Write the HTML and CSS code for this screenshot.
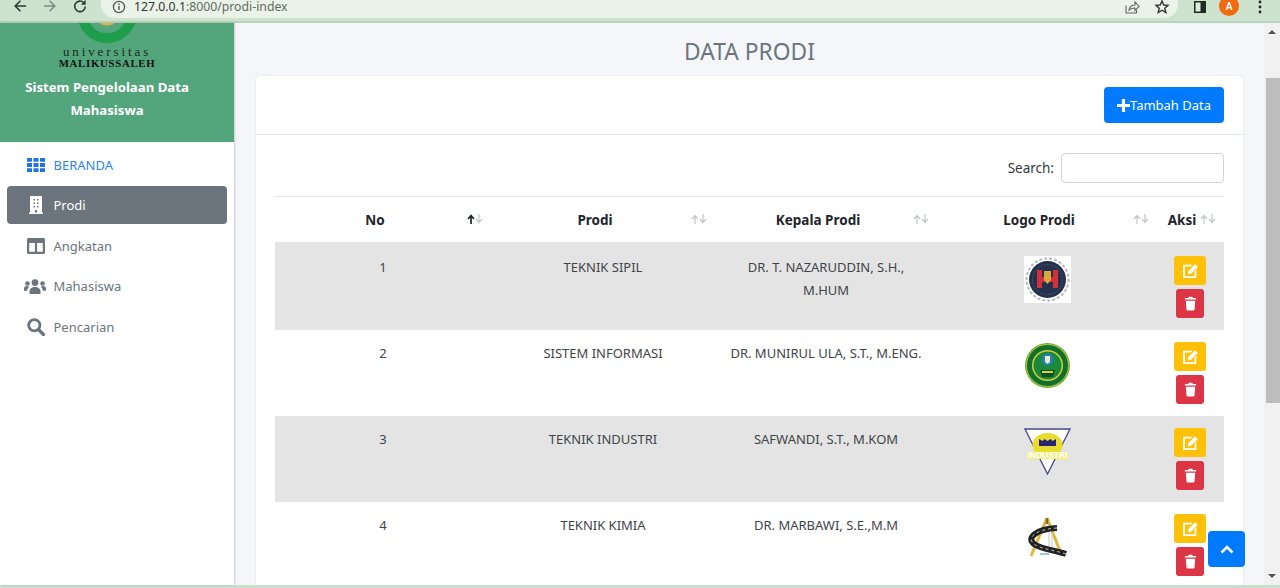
FILE: index.html
```html
<!DOCTYPE html>
<html lang="id">
<head>
<meta charset="utf-8">
<title>Data Prodi</title>
<link rel="stylesheet" href="styles.css">
</head>
<body>
<header class="chrome">
  <div class="nav-icons">
    <svg class="nav-ic" viewBox="0 0 16 16"><path d="M15 8H3M8.500 2 2.500 8l6 6" fill="none" stroke="#2e3a32" stroke-width="1.800"/></svg>
    <svg class="nav-ic" viewBox="0 0 16 16"><path d="M1 8h12M7.500 2l6 6-6 6" fill="none" stroke="#7d8c80" stroke-width="1.800"/></svg>
    <svg class="nav-ic" viewBox="0 0 16 16"><path d="M14 8.500a6 6 0 1 1-1.800-4.400" fill="none" stroke="#2e3a32" stroke-width="1.800"/><path d="M14.500 1v5.500H9z" fill="#2e3a32"/></svg>
  </div>
  <div class="omnibox">
    <svg class="info" viewBox="0 0 14 14"><circle cx="7" cy="7" r="5.600" fill="none" stroke="#555" stroke-width="1.300"/><path d="M7 6v4M7 3.600v1.300" stroke="#555" stroke-width="1.400"/></svg>
    <span class="url"><span class="url-host">127.0.0.1</span>:8000/prodi-index</span>
    <span class="spacer"></span>
    <svg class="omni-ic" viewBox="0 0 16 16"><path d="M2 6.500V14h10.500v-3" fill="none" stroke="#666" stroke-width="1.100"/><path d="M5 11c.5-3 3-5 6-5V3l4 4.500-4 4V9c-2.500 0-4.500.5-6 2z" fill="none" stroke="#666" stroke-width="1.100"/></svg>
    <svg class="omni-ic last" viewBox="0 0 16 16"><path d="m8 2 1.800 4 4.200.4-3.200 2.800 1 4.300L8 11.200 4.200 13.500l1-4.300L2 6.400 6.200 6z" fill="none" stroke="#333" stroke-width="1.400"/></svg>
  </div>
  <div class="chrome-right">
    <svg class="side-ic" viewBox="0 0 14 14"><path d="M1 1h12v12H1z" fill="#1f2a22"/><path d="M2.500 2.500h5v9h-5z" fill="#dcebd9"/></svg>
    <span class="avatar">A</span>
    <svg class="dots" viewBox="0 0 4 14"><circle cx="2" cy="2" r="1.400"/><circle cx="2" cy="7" r="1.400"/><circle cx="2" cy="12" r="1.400"/></svg>
  </div>
</header>

<div class="app">
  <aside class="sidebar">
    <div class="brand">
      <svg viewBox="0 0 60 20" class="brand-arc"><circle cx="30" cy="-10" r="25" fill="none" stroke="#1e9e4a" stroke-width="10"/><ellipse cx="30" cy="0" rx="7" ry="2.500" fill="#d9b44a"/></svg>
      <div class="brand-uni">universitas</div>
      <div class="brand-mal">MALIKUSSALEH</div>
      <div class="brand-title">Sistem Pengelolaan Data Mahasiswa</div>
    </div>
    <nav class="menu">
      <a class="menu-item home">
        <svg class="menu-ic grid" viewBox="0 0 18 16" preserveAspectRatio="none"><path fill="#1f74e0" d="M0 0h5v4.300H0zM6.500 0h5v4.300h-5zM13 0h5v4.300h-5zM0 5.800h5v4.400H0zM6.500 5.800h5v4.400h-5zM13 5.800h5v4.400h-5zM0 11.700h5V16H0zM6.500 11.700h5V16h-5zM13 11.700h5V16h-5z"/></svg>
        <span>BERANDA</span>
      </a>
      <a class="menu-item active">
        <svg class="menu-ic tall" viewBox="0 0 18 18"><path fill="#fff" fill-rule="evenodd" d="M3 0h12v16.500h1V18H2v-1.500h1zM6.500 3v1.500H8V3zM10 3v1.500h1.500V3zM6.500 6.500V8H8V6.500zM10 6.500V8h1.500V6.500zM6.500 10v1.500H8V10zM10 10v1.500h1.500V10zM8 14v2.500h2V14z"/></svg>
        <span>Prodi</span>
      </a>
      <a class="menu-item">
        <svg class="menu-ic" viewBox="0 0 18 16"><path fill="#6c757d" fill-rule="evenodd" d="M1.500 0h15A1.500 1.500 0 0 1 18 1.500v13a1.500 1.500 0 0 1-1.500 1.500h-15A1.500 1.500 0 0 1 0 14.500v-13A1.500 1.500 0 0 1 1.500 0zM2.200 5v8.800h5.700V5zm7.900 0v8.800h5.700V5z"/></svg>
        <span>Angkatan</span>
      </a>
      <a class="menu-item">
        <svg class="menu-ic wide" viewBox="0 0 22 15"><g fill="#6c757d"><circle cx="11" cy="3.600" r="3.400"/><circle cx="3.500" cy="4.500" r="2.300"/><circle cx="18.500" cy="4.500" r="2.300"/><path d="M5.500 15v-2.500C5.500 9.500 8 8 11 8s5.500 1.500 5.500 4.500V15zM0 10c0-1.800 1-3 2.800-3 1 0 1.700.2 2.500.8-1.300 1-2 2.500-2.200 4H0zM22 10c0-1.800-1-3-2.800-3-1 0-1.700.2-2.500.8 1.300 1 2 2.500 2.200 4H22z"/></g></svg>
        <span>Mahasiswa</span>
      </a>
      <a class="menu-item">
        <svg class="menu-ic tall" viewBox="0 0 18 18"><circle cx="7.300" cy="7.300" r="5.600" fill="none" stroke="#6c757d" stroke-width="2.800"/><path d="m11.500 11.500 5 5" stroke="#6c757d" stroke-width="3.200" stroke-linecap="round"/></svg>
        <span>Pencarian</span>
      </a>
    </nav>
  </aside>

  <main class="content">
    <h1 class="page-title">DATA PRODI</h1>
    <section class="card">
      <div class="card-head">
        <button class="btn-add"><svg class="plus" viewBox="0 0 14 14"><path d="M5.300 0h3.400v5.300H14v3.400H8.700V14H5.300V8.700H0V5.300h5.300z" fill="#fff"/></svg>Tambah Data</button>
      </div>
      <div class="card-body">
        <div class="search-row"><label class="search-label">Search:</label><input class="search-input" type="text"></div>
        <table class="data">
          <thead>
            <tr>
              <th class="c-no"><span class="th-txt">No</span><svg class="sort" viewBox="0 0 16 10"><use href="#ic-sort-on"/></svg></th>
              <th class="c-prodi"><span class="th-txt">Prodi</span><svg class="sort" viewBox="0 0 16 10"><use href="#ic-sort"/></svg></th>
              <th class="c-kepala"><span class="th-txt">Kepala Prodi</span><svg class="sort" viewBox="0 0 16 10"><use href="#ic-sort"/></svg></th>
              <th class="c-logo"><span class="th-txt">Logo Prodi</span><svg class="sort" viewBox="0 0 16 10"><use href="#ic-sort"/></svg></th>
              <th class="c-aksi"><span class="th-txt">Aksi</span><svg class="sort" viewBox="0 0 16 10"><use href="#ic-sort"/></svg></th>
            </tr>
          </thead>
          <tbody>
            <tr class="odd">
              <td>1</td><td>TEKNIK SIPIL</td><td class="kepala">DR. T. NAZARUDDIN, S.H., M.HUM</td>
              <td><svg class="logo" viewBox="0 0 47 47"><rect width="47" height="47" fill="#fff"/><circle cx="23.500" cy="23.500" r="21" fill="none" stroke="#b4b8c4" stroke-width="2" stroke-dasharray="3 2"/><circle cx="23.500" cy="23.500" r="18.500" fill="#25304d"/><circle cx="23.500" cy="23.500" r="15" fill="none" stroke="#56607a" stroke-width="1" stroke-dasharray="1.500 1.500"/><path d="M13 14h5v7h11v-7h5v18h-5v-6H18v6h-5z" fill="#d2303a"/><path d="M20 15h7v9l-3.500 4-3.500-4z" fill="#d9a93a"/></svg></td>
              <td class="actions"><a class="btn edit"><svg viewBox="0 0 16 16"><use href="#ic-edit"/></svg></a><a class="btn del"><svg viewBox="0 0 14 16"><use href="#ic-trash"/></svg></a></td>
            </tr>
            <tr>
              <td>2</td><td>SISTEM INFORMASI</td><td class="kepala">DR. MUNIRUL ULA, S.T., M.ENG.</td>
              <td><svg class="logo" viewBox="0 0 47 47"><circle cx="23.500" cy="23.500" r="22.500" fill="#76ad2b"/><circle cx="23.500" cy="23.500" r="21" fill="#12702f"/><circle cx="23.500" cy="23.500" r="21" fill="none" stroke="#c9d24a" stroke-width=".8"/><circle cx="23.500" cy="23.500" r="15.500" fill="#d9cf37"/><circle cx="23.500" cy="23.500" r="14" fill="#1a8a3a"/><circle cx="23.500" cy="17.500" r="6" fill="#2a7fb0"/><path d="M21 14h5v6l-2.500 2-2.500-2z" fill="#e8ecd2"/><path d="M16 28h15l-2 7H18z" fill="#0d4f22"/><path d="M18 29h11v2H18z" fill="#e4c930"/></svg></td>
              <td class="actions"><a class="btn edit"><svg viewBox="0 0 16 16"><use href="#ic-edit"/></svg></a><a class="btn del"><svg viewBox="0 0 14 16"><use href="#ic-trash"/></svg></a></td>
            </tr>
            <tr class="odd">
              <td>3</td><td>TEKNIK INDUSTRI</td><td class="kepala">SAFWANDI, S.T., M.KOM</td>
              <td><svg class="logo" viewBox="0 0 47 47"><path d="M1 1h45L23.500 46z" fill="#fff" stroke="#4a4590" stroke-width="1.300"/><ellipse cx="23.500" cy="17" rx="15" ry="12" fill="#e8dc2e"/><path d="M15 11l3.500 2 2-2 3 2 3-2 2 2 3.500-2v7H15z" fill="#2a2476"/><path d="M3 24h41v7H3z" fill="#f4f078"/><text x="23.500" y="30.300" class="logo-txt">INDUSTRI</text></svg></td>
              <td class="actions"><a class="btn edit"><svg viewBox="0 0 16 16"><use href="#ic-edit"/></svg></a><a class="btn del"><svg viewBox="0 0 14 16"><use href="#ic-trash"/></svg></a></td>
            </tr>
            <tr>
              <td>4</td><td>TEKNIK KIMIA</td><td class="kepala">DR. MARBAWI, S.E.,M.M</td>
              <td><svg class="logo" viewBox="0 0 47 47"><path d="M23 4 7 42M23 4l15 38" fill="none" stroke="#dcb93a" stroke-width="3"/><path d="M23 4v6" stroke="#8a6a2a" stroke-width="2.500"/><path d="M25 14v20M28 18v17" stroke="#c4c8cc" stroke-width="1"/><path d="M33 14C12 15 2 24 10 30c6 5 20 6 32 10" fill="none" stroke="#222" stroke-width="6"/><path d="M33 14C12 15 2 24 10 30c6 5 20 6 32 10" fill="none" stroke="#e8e8e8" stroke-width=".8" stroke-dasharray="3 3"/><path d="M16 40h9" stroke="#7db3d8" stroke-width="1.500"/></svg></td>
              <td class="actions"><a class="btn edit"><svg viewBox="0 0 16 16"><use href="#ic-edit"/></svg></a><a class="btn del"><svg viewBox="0 0 14 16"><use href="#ic-trash"/></svg></a></td>
            </tr>
          </tbody>
        </table>
      </div>
    </section>
  </main>

  <div class="scrollbar"><span class="sb-up"></span><span class="sb-thumb"></span><span class="sb-down"></span></div>
  <a class="to-top"><svg viewBox="0 0 14 9"><path d="M1.500 7.500 7 2l5.500 5.500" fill="none" stroke="#fff" stroke-width="2.600"/></svg></a>
</div>
<div class="bottom-line"></div>

<svg class="defs" width="0" height="0">
  <symbol id="ic-edit" viewBox="0 0 16 16"><path fill="#fff" d="M1 2.500h9L8.300 4.200H2.700v9.100h9.100V8.700l1.700-1.700V14a1 1 0 0 1-1 1H2a1 1 0 0 1-1-1z"/><path fill="#fff" d="M6 8.500 12.300 2.200l2.500 2.500-6.300 6.300-3 .5z"/></symbol>
  <symbol id="ic-trash" viewBox="0 0 14 16"><path fill="#fff" d="M1 2h3.500l.7-1.200h3.600L9.500 2H13v1.800H1zM2 5h10l-.7 9.500a1.200 1.200 0 0 1-1.200 1H3.900a1.200 1.200 0 0 1-1.200-1z"/></symbol>
  <symbol id="ic-sort" viewBox="0 0 16 10"><path d="M4 10V2M1 5l3-3.500L7 5M12 0v8M9 5l3 3.500L15 5" fill="none" stroke="#c6c9cc" stroke-width="1.300"/></symbol>
  <symbol id="ic-sort-on" viewBox="0 0 16 10"><path d="M4 10V2M1 5l3-3.500L7 5" fill="none" stroke="#212529" stroke-width="1.700"/><path d="M12 0v8M9 5l3 3.500L15 5" fill="none" stroke="#c6c9cc" stroke-width="1.300"/></symbol>
</svg>
</body>
</html>
```

FILE: styles.css
```css
* { box-sizing: border-box; }
html, body { margin: 0; height: 100%; overflow: hidden; }
body { font-family: "Noto Sans", "Open Sans", sans-serif; font-size: 14px; color: #212529; background: #f4f6f9; display: flex; flex-direction: column; }

.chrome { height: 23px; flex: none; background: #cde3cd; display: flex; align-items: flex-start; border-bottom: 2px solid #b9d3bc; overflow: hidden; }
.nav-icons { display: flex; gap: 16px; padding-left: 13px; width: 101px; margin-top: -1px; }
.nav-ic { width: 14px; height: 14px; }
.omnibox { width: 1077px; height: 18px; background: #eaf3e8; border-radius: 0 0 14px 14px; display: flex; align-items: center; padding: 0 0 5px 11px; }
.info { width: 14px; height: 14px; }
.url { font-size: 12.250px; color: #5f6b63; margin-left: 8px; }
.url-host { color: #333; }
.spacer { flex: 1; }
.omni-ic { width: 16px; height: 16px; margin-right: 14px; }
.omni-ic.last { margin-right: 8px; }
.chrome-right { display: flex; align-items: center; flex: 1; height: 14px; padding-left: 15px; }
.side-ic { width: 14px; height: 14px; }
.avatar { width: 20px; height: 20px; margin: -3px 0 0 12px; border-radius: 50%; background: #f06a0e; color: #fff; font-size: 10px; font-weight: 600; display: flex; align-items: center; justify-content: center; flex: none; }
.dots { width: 4px; height: 14px; margin-left: 19px; fill: #222; flex: none; }

.app { flex: 1; display: flex; position: relative; min-height: 0; }
.sidebar { width: 234px; flex: none; background: #fff; box-shadow: 1px 0 2px rgba(0,0,0,.18); }
.brand { height: 119px; background: #53a67b; padding-right: 20px; text-align: center; overflow: hidden; color: #fff; }
.brand-arc { display: block; width: 60px; height: 20px; margin: 0 auto 2px; }
.brand-uni { font-family: "Liberation Serif", serif; font-size: 13px; letter-spacing: 2.900px; color: #1c2a22; line-height: 13px; }
.brand-mal { font-family: "Liberation Serif", serif; font-weight: 700; font-size: 10.800px; letter-spacing: .7px; color: #111; line-height: 11px; margin-bottom: 7px; }
.brand-title { font-weight: 700; font-size: 13.200px; line-height: 23px; width: 180px; margin: 0 auto; }

.menu { padding: 3.500px 7px 0 7px; display: flex; flex-direction: column; gap: 2.500px; }
.menu-item { height: 38px; display: flex; align-items: center; gap: 8.500px; padding-left: 20px; color: #6c757d; border-radius: 4px; font-size: 13px; }
.menu-item.home { color: #2f85f0; }
.menu-item.active { background: #6c757d; color: #fff; }
.menu-ic { width: 18px; height: 16px; flex: none; }
.menu-ic.grid { height: 14px; }
.menu-ic.tall { height: 18px; }
.menu-ic.wide { width: 22px; height: 15px; margin: 0 -1px 0 -3px; }

.content { flex: 1; min-width: 0; padding: 0 21px 0 22px; overflow: hidden; }
.page-title { margin: 15px 0 10px; font-size: 22.800px; line-height: 28px; font-weight: 400; color: #6c757d; text-align: center; }
.card { background: #fff; border-radius: 4px; box-shadow: 0 0 2px rgba(0,0,0,.12); height: 600px; }
.card-head { height: 59px; border-bottom: 1px solid #e5e7ea; padding: 11px 19px 0 0; display: flex; justify-content: flex-end; align-items: flex-start; }
.btn-add { height: 36px; width: 120px; background: #007bff; border: 0; border-radius: 4px; color: #fff; font: 400 13px "Noto Sans", sans-serif; display: flex; align-items: center; justify-content: center; padding: 0; }
.plus { width: 13px; height: 13px; }
.card-body { padding: 18px 19px 0; }
.search-row { display: flex; justify-content: flex-end; align-items: flex-start; gap: 7px; height: 31px; margin-bottom: 12px; }
.search-label { color: #343a40; font-size: 13.500px; line-height: 30px; }
.search-input { width: 163px; height: 30px; border: 1px solid #ced4da; border-radius: 4px; background: #fff; }

.data { width: 100%; border-collapse: collapse; table-layout: fixed; font-size: 13px; color: #3f4449; }
.data th { height: 45px; border-top: 1px solid #e5e7ea; font-size: 13.500px; font-weight: 700; color: #212529; position: relative; padding: 2px 0 0; }
.th-txt { display: block; padding-right: 16px; }
.c-no { width: 216px; }
.c-prodi { width: 224px; }
.c-kepala { width: 222px; }
.c-logo { width: 220px; }
.c-aksi { width: 67px; }
.c-aksi .th-txt { padding-right: 17px; }
.sort { position: absolute; right: 8px; top: 17px; width: 16px; height: 10px; }
.data td { height: 86px; padding: 12px 10px 0; text-align: center; vertical-align: top; line-height: 23px; }
.data tbody tr:first-child td { height: 88px; padding-top: 14px; }
.data tr.odd td { background: #e4e4e4; }
.logo { width: 47px; height: 47px; display: block; margin: 0 auto; }
.logo-txt { font: 700 8.500px "Liberation Sans", sans-serif; fill: #fff; text-anchor: middle; }
.data td.actions { padding-left: 0; padding-right: 1px; }
.btn { display: flex; align-items: center; justify-content: center; margin: 0 auto; border-radius: 3px; }
.btn svg { width: 15px; height: 15px; }
.edit { width: 32px; height: 29px; background: #ffc107; }
.edit svg { width: 17px; height: 17px; }
.del { width: 28px; height: 29px; background: #dc3545; margin: 4px auto 0; }

.scrollbar { width: 16px; flex: none; background: #f1f1f1; display: flex; flex-direction: column; align-items: center; }
.sb-up { width: 0; height: 0; border: 4px solid transparent; border-top: 0; border-bottom: 4px solid #505050; margin-top: 7px; }
.sb-thumb { width: 14px; height: 325px; background: #bdbdbd; margin-top: 44px; align-self: flex-end; }
.sb-down { width: 0; height: 0; border: 4px solid transparent; border-bottom: 0; border-top: 4px solid #505050; margin-top: auto; margin-bottom: 7px; }
.to-top { position: absolute; right: 35px; bottom: 18px; width: 37px; height: 36px; background: #007bff; border-radius: 4px; display: flex; align-items: center; justify-content: center; }
.to-top svg { width: 14px; height: 9px; }
.bottom-line { height: 3px; flex: none; background: #c9dfc9; }
.defs { position: absolute; }
```
